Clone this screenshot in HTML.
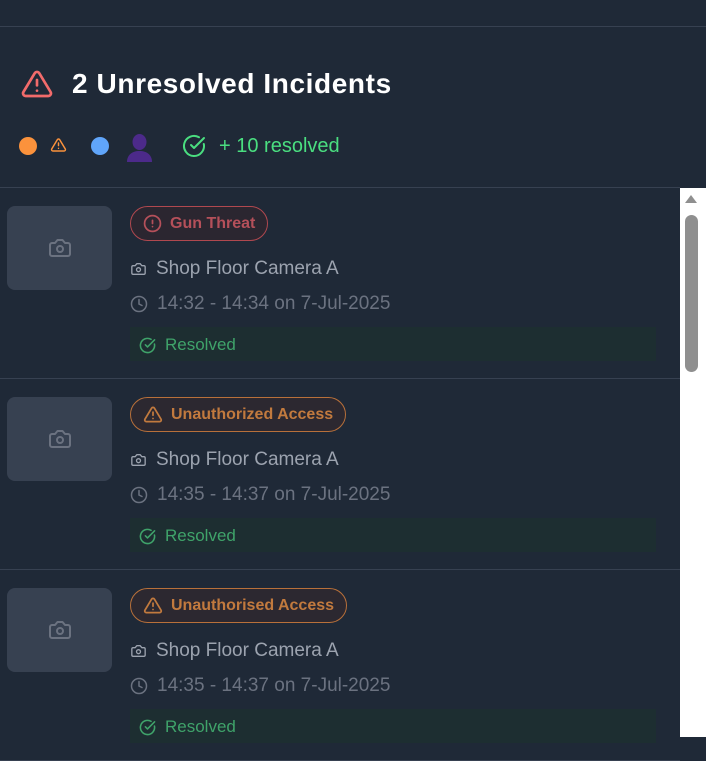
<!DOCTYPE html>
<html><head><style>
*{margin:0;padding:0;box-sizing:border-box}
body{width:706px;height:737px;overflow:hidden;background:#1f2937;font-family:"Liberation Sans",sans-serif;position:relative}
.top{position:absolute;left:0;top:26px;width:706px;height:1px;background:#374151}
.h{position:absolute;left:20px;top:68px;display:flex;align-items:center}
.h span{color:#fff;font-weight:bold;font-size:28px;letter-spacing:0.6px;margin-left:18px}
.a{position:absolute}
.dot{width:18px;height:18px;border-radius:50%}
.sep{position:absolute;left:0;top:187px;width:680px;height:1px;background:#374151}
.row{position:absolute;left:0;width:680px;height:191px;border-bottom:1px solid #374151}
.th{position:absolute;left:7px;top:18px;width:105px;height:84px;background:#374151;border-radius:8px;display:flex;align-items:center;justify-content:center}
.badge{position:absolute;left:130px;top:18px;height:35px;border-radius:18px;display:flex;align-items:center;padding:0 12px 0 12px;font-weight:bold;font-size:16px}
.red{border:1px solid #b0484f;color:#b5505a;background:#2b2630}
.org{border:1px solid #b8703a;color:#c27a3e;background:#2c2830}
.badge svg{margin-right:8px}
.cam{position:absolute;left:130px;top:70px;display:flex;align-items:center;color:#9ca3af;font-size:19px}
.tm{position:absolute;left:130px;top:105px;display:flex;align-items:center;color:#6b7280;font-size:19px}
.cam svg,.tm svg{margin-right:9px}
.res{position:absolute;left:130px;top:139px;width:526px;height:34px;background:#1d2e31;display:flex;align-items:center;padding-left:9px;color:#3fa36a;font-size:17px;padding-top:2px}
.res svg{margin-right:9px}
.sb{position:absolute;left:680px;top:188px;width:26px;height:549px;background:#fff}
.thumb{position:absolute;left:685px;top:215px;width:13px;height:157px;background:#8f8f8f;border-radius:7px}
</style></head><body>
<div class="top"></div>
<div class="h"><svg width="34" height="32" viewBox="0 0 24 24" fill="none" stroke="#f26b6b" stroke-width="2" stroke-linecap="round" stroke-linejoin="round"><path d="M10.3 3.9 1.8 18a2 2 0 0 0 1.7 3h17a2 2 0 0 0 1.7-3L13.7 3.9a2 2 0 0 0-3.4 0z"/><path d="M12 9v4M12 17h.01"/></svg><span>2 Unresolved Incidents</span></div>

<div class="a dot" style="left:19px;top:137px;background:#fb923c"></div>
<svg class="a" style="left:50px;top:137px" width="17" height="16" viewBox="0 0 24 24" fill="none" stroke="#fb923c" stroke-width="2.2" stroke-linecap="round" stroke-linejoin="round"><path d="M10.3 3.9 1.8 18a2 2 0 0 0 1.7 3h17a2 2 0 0 0 1.7-3L13.7 3.9a2 2 0 0 0-3.4 0z"/><path d="M12 9v4M12 17h.01"/></svg>
<div class="a dot" style="left:91px;top:137px;background:#60a5fa"></div>
<svg class="a" style="left:126px;top:133px" width="27" height="29" viewBox="0 0 27 29"><ellipse cx="13.5" cy="9" rx="7" ry="8" fill="#4c2a8a"/><path d="M1 29c0-7 5-11 12.5-11S26 22 26 29z" fill="#4c2a8a"/></svg>
<svg class="a" style="left:182px;top:134px" width="24" height="24" viewBox="0 0 24 24" fill="none" stroke="#4ade80" stroke-width="2" stroke-linecap="round" stroke-linejoin="round"><path d="M21.8 10A10 10 0 1 1 17 3.3"/><path d="m9 11 3 3L22 4"/></svg>
<span class="a" style="left:219px;top:135px;color:#4ade80;font-size:20px">+ 10 resolved</span>
<div class="sep"></div>

<div class="row" style="top:188px">
<div class="th"><svg width="26" height="24" viewBox="0 0 24 24" fill="none" stroke="#6b7280" stroke-width="2" stroke-linecap="round" stroke-linejoin="round"><path d="M14.5 4h-5L7 7H4a2 2 0 0 0-2 2v9a2 2 0 0 0 2 2h16a2 2 0 0 0 2-2V9a2 2 0 0 0-2-2h-3z"/><circle cx="12" cy="13" r="3"/></svg></div>
<div class="badge red"><svg width="19" height="19" viewBox="0 0 24 24" fill="none" stroke="#b5505a" stroke-width="2.2" stroke-linecap="round"><circle cx="12" cy="12" r="10"/><path d="M12 8v4M12 16h.01"/></svg>Gun Threat</div>
<div class="cam"><svg width="17" height="16" viewBox="0 0 24 24" fill="none" stroke="#9ca3af" stroke-width="2" stroke-linejoin="round"><path d="M14.5 4h-5L7 7H4a2 2 0 0 0-2 2v9a2 2 0 0 0 2 2h16a2 2 0 0 0 2-2V9a2 2 0 0 0-2-2h-3z"/><circle cx="12" cy="13" r="3"/></svg>Shop Floor Camera A</div>
<div class="tm"><svg width="18" height="18" viewBox="0 0 24 24" fill="none" stroke="#6b7280" stroke-width="2" stroke-linecap="round"><circle cx="12" cy="12" r="10"/><path d="M12 6v6l4 2"/></svg>14:32 - 14:34 on 7-Jul-2025</div>
<div class="res"><svg width="17" height="17" viewBox="0 0 24 24" fill="none" stroke="#3fa36a" stroke-width="2.2" stroke-linecap="round" stroke-linejoin="round"><path d="M21.8 10A10 10 0 1 1 17 3.3"/><path d="m9 11 3 3L22 4"/></svg>Resolved</div>
</div>

<div class="row" style="top:379px">
<div class="th"><svg width="26" height="24" viewBox="0 0 24 24" fill="none" stroke="#6b7280" stroke-width="2" stroke-linecap="round" stroke-linejoin="round"><path d="M14.5 4h-5L7 7H4a2 2 0 0 0-2 2v9a2 2 0 0 0 2 2h16a2 2 0 0 0 2-2V9a2 2 0 0 0-2-2h-3z"/><circle cx="12" cy="13" r="3"/></svg></div>
<div class="badge org"><svg width="20" height="19" viewBox="0 0 24 24" fill="none" stroke="#c27a3e" stroke-width="2.2" stroke-linecap="round" stroke-linejoin="round"><path d="M10.3 3.9 1.8 18a2 2 0 0 0 1.7 3h17a2 2 0 0 0 1.7-3L13.7 3.9a2 2 0 0 0-3.4 0z"/><path d="M12 9v4M12 17h.01"/></svg>Unauthorized Access</div>
<div class="cam"><svg width="17" height="16" viewBox="0 0 24 24" fill="none" stroke="#9ca3af" stroke-width="2" stroke-linejoin="round"><path d="M14.5 4h-5L7 7H4a2 2 0 0 0-2 2v9a2 2 0 0 0 2 2h16a2 2 0 0 0 2-2V9a2 2 0 0 0-2-2h-3z"/><circle cx="12" cy="13" r="3"/></svg>Shop Floor Camera A</div>
<div class="tm"><svg width="18" height="18" viewBox="0 0 24 24" fill="none" stroke="#6b7280" stroke-width="2" stroke-linecap="round"><circle cx="12" cy="12" r="10"/><path d="M12 6v6l4 2"/></svg>14:35 - 14:37 on 7-Jul-2025</div>
<div class="res"><svg width="17" height="17" viewBox="0 0 24 24" fill="none" stroke="#3fa36a" stroke-width="2.2" stroke-linecap="round" stroke-linejoin="round"><path d="M21.8 10A10 10 0 1 1 17 3.3"/><path d="m9 11 3 3L22 4"/></svg>Resolved</div>
</div>

<div class="row" style="top:570px">
<div class="th"><svg width="26" height="24" viewBox="0 0 24 24" fill="none" stroke="#6b7280" stroke-width="2" stroke-linecap="round" stroke-linejoin="round"><path d="M14.5 4h-5L7 7H4a2 2 0 0 0-2 2v9a2 2 0 0 0 2 2h16a2 2 0 0 0 2-2V9a2 2 0 0 0-2-2h-3z"/><circle cx="12" cy="13" r="3"/></svg></div>
<div class="badge org"><svg width="20" height="19" viewBox="0 0 24 24" fill="none" stroke="#c27a3e" stroke-width="2.2" stroke-linecap="round" stroke-linejoin="round"><path d="M10.3 3.9 1.8 18a2 2 0 0 0 1.7 3h17a2 2 0 0 0 1.7-3L13.7 3.9a2 2 0 0 0-3.4 0z"/><path d="M12 9v4M12 17h.01"/></svg>Unauthorised Access</div>
<div class="cam"><svg width="17" height="16" viewBox="0 0 24 24" fill="none" stroke="#9ca3af" stroke-width="2" stroke-linejoin="round"><path d="M14.5 4h-5L7 7H4a2 2 0 0 0-2 2v9a2 2 0 0 0 2 2h16a2 2 0 0 0 2-2V9a2 2 0 0 0-2-2h-3z"/><circle cx="12" cy="13" r="3"/></svg>Shop Floor Camera A</div>
<div class="tm"><svg width="18" height="18" viewBox="0 0 24 24" fill="none" stroke="#6b7280" stroke-width="2" stroke-linecap="round"><circle cx="12" cy="12" r="10"/><path d="M12 6v6l4 2"/></svg>14:35 - 14:37 on 7-Jul-2025</div>
<div class="res"><svg width="17" height="17" viewBox="0 0 24 24" fill="none" stroke="#3fa36a" stroke-width="2.2" stroke-linecap="round" stroke-linejoin="round"><path d="M21.8 10A10 10 0 1 1 17 3.3"/><path d="m9 11 3 3L22 4"/></svg>Resolved</div>
</div>

<div class="sb"></div>
<svg style="position:absolute;left:684px;top:194px" width="14" height="10" viewBox="0 0 14 10"><path d="M7 1 13 9H1z" fill="#8f8f8f"/></svg>
<div class="thumb"></div>
</body></html>
